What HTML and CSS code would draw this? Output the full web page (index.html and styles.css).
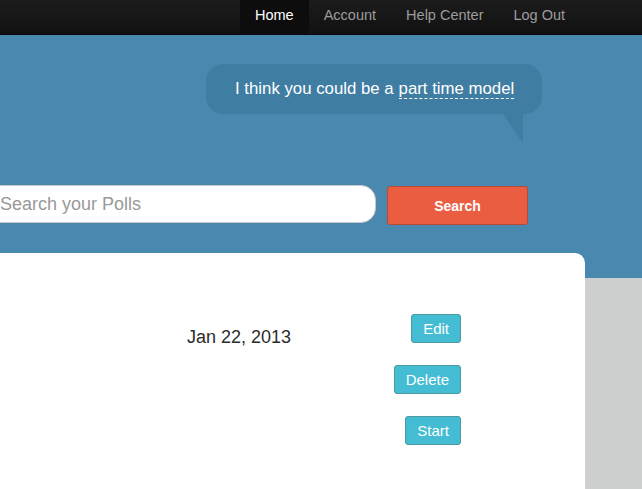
FILE: index.html
```html
<!DOCTYPE html>
<html>
<head>
<meta charset="utf-8">
<link rel="stylesheet" href="styles.css">
</head>
<body>
<header class="topbar">
  <nav class="nav">
    <a class="nav-item active">Home</a>
    <a class="nav-item">Account</a>
    <a class="nav-item">Help Center</a>
    <a class="nav-item">Log Out</a>
  </nav>
</header>
<section class="hero">
  <div class="bubble-row">
    <div class="bubble">I think you could be a <span class="dashed">part time model</span></div>
  </div>
  <form class="search-row">
    <input class="search-input" type="text" placeholder="Search your Polls">
    <button class="search-btn" type="button">Search</button>
  </form>
</section>
<main class="card">
  <div class="poll-row">
    <div class="poll-date">Jan 22, 2013</div>
    <div class="actions">
      <button class="btn" type="button">Edit</button>
      <button class="btn" type="button">Delete</button>
      <button class="btn" type="button">Start</button>
    </div>
  </div>
</main>
</body>
</html>
```
FILE: styles.css
```css
* { box-sizing: border-box; }
html, body {
  margin: 0;
  padding: 0;
  height: 100%;
  overflow: hidden;
}
body {
  background: #cdd0cf;
  font-family: "Liberation Sans", Arial, sans-serif;
}
.topbar {
  height: 35px;
  background: linear-gradient(#1c1c1c, #111111);
  border-bottom: 1px solid #0a0a0a;
  display: flex;
  padding-left: 240px;
}
.nav { display: flex; }
.nav-item {
  display: flex;
  align-items: center;
  padding: 0 15px 5px;
  font-size: 14.5px;
  color: #9c9c9c;
  height: 34px;
}
.nav-item.active {
  color: #ffffff;
  background: #0d0d0d;
}
.hero {
  background: #4a89af;
  height: 243px;
  padding-top: 29px;
}
.bubble-row {
  display: flex;
  justify-content: flex-end;
  padding-right: 100px;
}
.bubble {
  position: relative;
  width: 336px;
  height: 50px;
  border-radius: 17px;
  background: #3f7da3;
  color: #ffffff;
  font-size: 16.8px;
  padding-left: 29px;
  display: flex;
  align-items: center;
  white-space: nowrap;
}
.bubble::after {
  content: "";
  position: absolute;
  right: 19px;
  top: 50px;
  width: 0;
  height: 0;
  border-top: 29px solid #3f7da3;
  border-left: 20px solid transparent;
}
.dashed {
  border-bottom: 1px dashed #ffffff;
  line-height: 19px;
  margin-left: 5px;
}
.search-row {
  display: flex;
  align-items: flex-start;
  margin: 0;
  margin-top: 71px;
}
.search-input {
  margin-left: -14px;
  width: 390px;
  height: 38px;
  border: 1px solid #c9c9c9;
  border-radius: 15px;
  background: #ffffff;
  font-family: "Liberation Sans", Arial, sans-serif;
  font-size: 18px;
  padding: 0 0 0 13px;
  outline: none;
}
.search-input::placeholder { color: #999999; }
.search-btn {
  margin-left: 11px;
  margin-top: 1px;
  width: 141px;
  height: 39px;
  background: #ea5d41;
  border: 1px solid #b84a35;
  border-radius: 3px;
  color: #ffffff;
  font-family: "Liberation Sans", Arial, sans-serif;
  font-weight: bold;
  font-size: 14px;
}
.card {
  margin-top: -25px;
  width: 585px;
  height: 236px;
  background: #ffffff;
  border-top-right-radius: 10px;
  padding: 61px 124px 0 187px;
}
.poll-row {
  display: flex;
  justify-content: space-between;
  align-items: flex-start;
}
.poll-date {
  font-size: 18px;
  color: #2b2b2b;
  margin-top: 13px;
}
.actions {
  display: flex;
  flex-direction: column;
  align-items: flex-end;
  gap: 22px;
}
.btn {
  height: 29px;
  padding: 0 11px;
  background: #44bcd3;
  border: 1px solid #4b9a9e;
  border-radius: 3px;
  color: #ffffff;
  font-family: "Liberation Sans", Arial, sans-serif;
  font-size: 15px;
}
```
